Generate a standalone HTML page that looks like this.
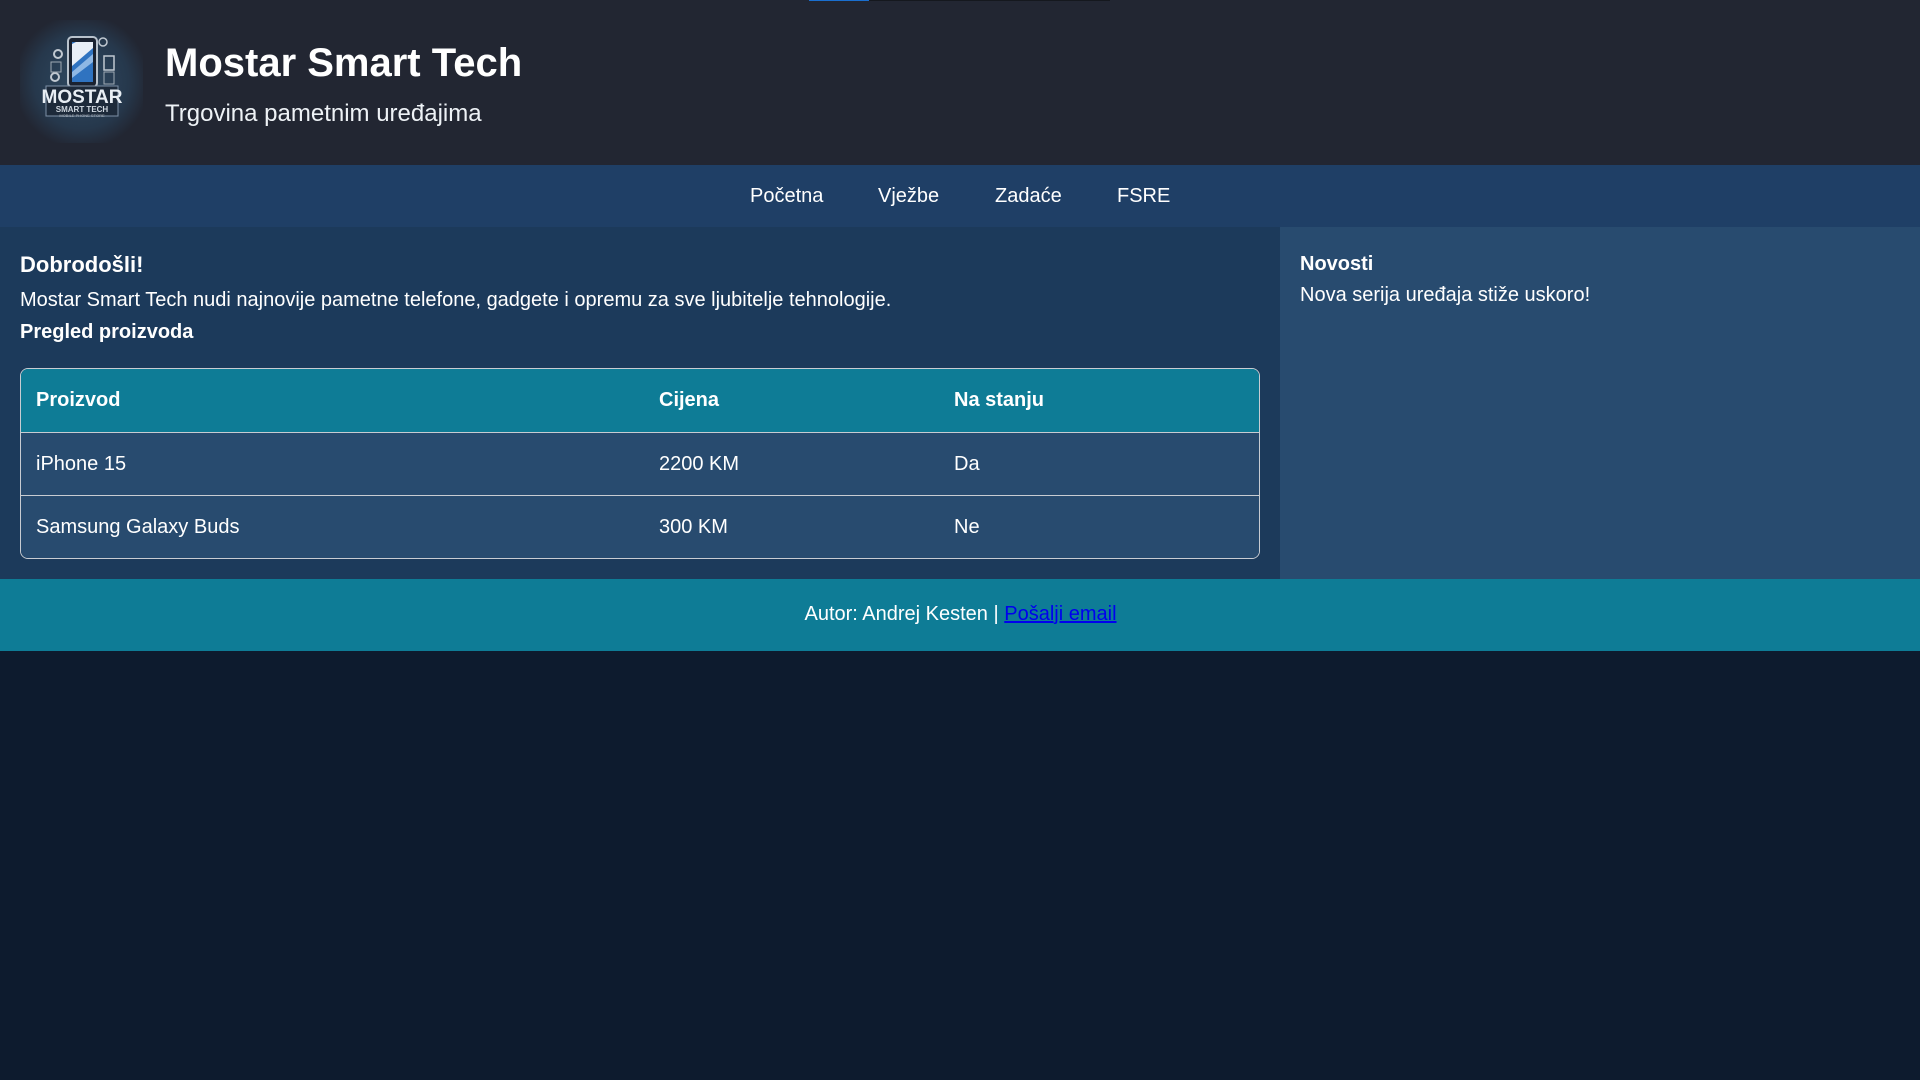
<!DOCTYPE html>
<html><head><meta charset="utf-8">
<style>
*{margin:0;padding:0;box-sizing:border-box}
body{width:1920px;height:1080px;background:#0d1b2e;font-family:"Liberation Sans",Arial,sans-serif;color:#fff;position:relative;overflow:hidden}
.a{position:absolute;white-space:nowrap}
header{position:absolute;left:0;top:0;width:1920px;height:165px;background:#222632}
nav{position:absolute;left:0;top:165px;width:1920px;height:62px;background:#1f3f66}
.main{position:absolute;left:0;top:227px;width:1280px;height:352px;background:#1c3a5b}
.side{position:absolute;left:1280px;top:227px;width:640px;height:352px;background:#284b6f}
footer{position:absolute;left:0;top:579px;width:1920px;height:72px;background:#0e7c96}
table{position:absolute;left:20px;top:368px;width:1240px;height:190px;border:1px solid #c8ccd2;border-radius:8px;border-collapse:separate;border-spacing:0;overflow:hidden;font-size:20px}
th{background:#0e7c96;text-align:left;font-weight:bold;height:63px;padding-left:15px}
td{background:#284b6f;height:63px;padding-left:15px;border-top:1px solid #c8ccd2}
</style></head><body>
<header>
<div class="a" style="left:809px;top:0;width:60px;height:1px;background:#1a6fd0"></div>
<div class="a" style="left:869px;top:0;width:241px;height:1px;background:#15181e"></div>
<svg class="a" style="left:20px;top:20px" width="123" height="123" viewBox="0 0 123 123">
<defs><radialGradient id="g" cx="50%" cy="50%" r="55%"><stop offset="0" stop-color="#2f4a62"/><stop offset="0.7" stop-color="#26384c"/><stop offset="1" stop-color="#222632"/></radialGradient></defs>
<rect width="123" height="123" fill="url(#g)"/>
<rect x="48" y="17" width="29" height="50" rx="4" fill="#1a2230" stroke="#b8c2cc" stroke-width="2"/>
<path d="M52 22 L73 22 L73 62 L52 62Z" fill="#2f73c0"/>
<path d="M52 24 L52 46 L73 28 L73 22 L56 22Z" fill="#e8eef6"/>
<path d="M52 52 L73 34 L73 42 L52 58Z" fill="#8fb8e4"/>
<circle cx="38" cy="34" r="4" fill="none" stroke="#c0c8d0" stroke-width="2"/>
<circle cx="35" cy="57" r="4" fill="none" stroke="#c0c8d0" stroke-width="2"/>
<rect x="31" y="42" width="10" height="10" fill="none" stroke="#a0aab4"/>
<rect x="84" y="36" width="10" height="14" fill="none" stroke="#c0c8d0" stroke-width="1.5"/>
<rect x="84" y="52" width="10" height="12" fill="none" stroke="#a0aab4"/>
<circle cx="83" cy="22" r="4" fill="none" stroke="#c0c8d0" stroke-width="1.5"/>
<rect x="26" y="66" width="72" height="30" fill="#1d2a3a" stroke="#7d90a6" stroke-width="1"/>
<text x="62" y="83" font-family="Liberation Sans" font-weight="bold" font-size="19" fill="#e8eef4" text-anchor="middle">MOSTAR</text>
<text x="62" y="92" font-family="Liberation Sans" font-weight="bold" font-size="8" fill="#d0d8e0" text-anchor="middle">SMART TECH</text>
<text x="62" y="97" font-family="Liberation Sans" font-size="4" fill="#b0b8c0" text-anchor="middle">MOBILE PHONE STORE</text>
</svg>
<div class="a" style="left:165px;top:41px;font-size:40px;font-weight:bold">Mostar Smart Tech</div>
<div class="a" style="left:165px;top:100px;font-size:24px;color:#eef2f6">Trgovina pametnim uređajima</div>
</header>
<nav>
<div class="a" style="left:750px;top:20px;font-size:20px">Početna</div>
<div class="a" style="left:878px;top:20px;font-size:20px">Vježbe</div>
<div class="a" style="left:995px;top:20px;font-size:20px">Zadaće</div>
<div class="a" style="left:1117px;top:20px;font-size:20px">FSRE</div>
</nav>
<div class="main">
<div class="a" style="left:20px;top:25px;font-size:22px;font-weight:bold">Dobrodošli!</div>
<div class="a" style="left:20px;top:62px;font-size:20px">Mostar Smart Tech nudi najnovije pametne telefone, gadgete i opremu za sve ljubitelje tehnologije.</div>
<div class="a" style="left:20px;top:94px;font-size:20px;font-weight:bold">Pregled proizvoda</div>
</div>
<table>
<tr><th style="width:623px">Proizvod</th><th style="width:295px">Cijena</th><th>Na stanju</th></tr>
<tr><td>iPhone 15</td><td>2200 KM</td><td>Da</td></tr>
<tr><td>Samsung Galaxy Buds</td><td>300 KM</td><td>Ne</td></tr>
</table>
<div class="side">
<div class="a" style="left:20px;top:26px;font-size:20px;font-weight:bold">Novosti</div>
<div class="a" style="left:20px;top:57px;font-size:20px">Nova serija uređaja stiže uskoro!</div>
</div>
<footer>
<div class="a" style="left:0;width:1920px;text-align:center;top:24px;font-size:20px;padding-left:1px">Autor: Andrej Kesten | <a style="color:#0000ee;text-decoration:underline">Pošalji email</a></div>
</footer>
</body></html>
